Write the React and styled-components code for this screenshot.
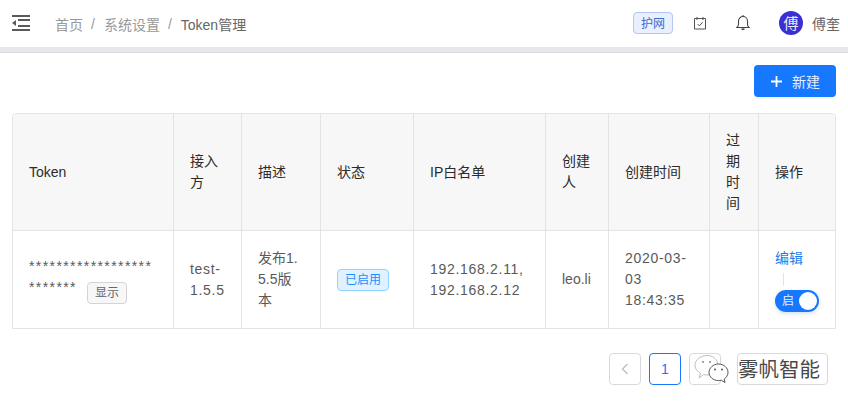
import styled, { createGlobalStyle } from 'styled-components'

const Estilos = createGlobalStyle`
  * {
    box-sizing: border-box;
  }
  html, body {
    margin: 0;
    background: #fff;
    font-family: "Liberation Sans", "Noto Sans CJK SC", sans-serif;
    font-size: 14px;
    color: #595959;
  }
`

const Cabecera = styled.header`
  display: flex;
  align-items: center;
  justify-content: space-between;
  height: 47px;
  padding: 0 8px 2px 12px;
  background: #fff;
`

const Izquierda = styled.div`
  display: flex;
  align-items: center;
  gap: 25px;
`

const Migas = styled.nav`
  display: flex;
  align-items: center;
  padding-top: 3px;
  color: #999;
`

const Separador = styled.span`
  margin: 0 9px 0 8px;
`

const MigaActual = styled.span`
  color: #666;
`

const Derecha = styled.div`
  display: flex;
  align-items: center;
`

const Etiqueta = styled.span`
  display: flex;
  align-items: center;
  justify-content: center;
  width: 40px;
  height: 22px;
  margin-right: 20px;
  border: 1px solid #b3c6f4;
  border-radius: 4px;
  background: #e9effd;
  color: #3f68cc;
  font-size: 12px;
`

const Icono = styled.svg`
  display: block;
  flex: none;
  margin-right: ${(p) => p.$derecha}px;
`

const Avatar = styled.span`
  display: flex;
  align-items: center;
  justify-content: center;
  width: 24px;
  height: 24px;
  margin-right: 9px;
  border-radius: 50%;
  background: #3a2fd2;
  color: #e8e8ff;
  font-size: 15px;
`

const Nombre = styled.span`
  color: #666;
  white-space: nowrap;
`

const Franja = styled.div`
  height: 6px;
  background: #e5e7eb;
  border-bottom: 1px solid #dcdcdc;
`

const Contenido = styled.main`
  padding: 12px 12px 0;
`

const Barra = styled.div`
  display: flex;
  justify-content: flex-end;
  margin-bottom: 16px;
`

const BotonNuevo = styled.button`
  display: flex;
  align-items: center;
  gap: 10px;
  width: 82px;
  height: 32px;
  padding: 0 0 0 17px;
  border: none;
  border-radius: 4px;
  background: #1677ff;
  box-shadow: 0 2px 0 rgba(0, 0, 0, 0.04);
  color: #e6f0ff;
  font-family: inherit;
  font-size: 14px;
`

const MarcoTabla = styled.div`
  border: 1px solid #e3e3e3;
  border-radius: 4px 4px 0 0;
  overflow: hidden;
`

const Tabla = styled.table`
  width: 822px;
  table-layout: fixed;
  border-collapse: separate;
  border-spacing: 0;
  line-height: 21px;
`

const Cabeza = styled.th`
  padding: 16px;
  background: #f7f7f7;
  border-right: 1px solid #e3e3e3;
  border-bottom: 1px solid #e3e3e3;
  color: #2b2b2b;
  font-weight: 400;
  text-align: left;
  &:last-child {
    border-right: none;
  }
`

const Celda = styled.td`
  padding: 16px;
  border-right: 1px solid #e3e3e3;
  letter-spacing: ${(p) => (p.$numeros ? '0.7px' : '0')};
  word-break: ${(p) => (p.$cortar ? 'break-all' : 'normal')};
  &:last-child {
    border-right: none;
  }
`

const Asteriscos = styled.span`
  letter-spacing: 1.4px;
`

const BotonMostrar = styled.button`
  display: inline-block;
  width: 40px;
  height: 22px;
  margin-left: 10px;
  padding: 0;
  border: 1px solid #d4d4d4;
  border-radius: 4px;
  background: #f7f7f7;
  color: #666;
  font-family: inherit;
  font-size: 12px;
  line-height: 20px;
  vertical-align: -5px;
`

const Estado = styled.span`
  display: inline-block;
  width: 52px;
  height: 22px;
  border: 1px solid #91d5ff;
  border-radius: 4px;
  background: #e0f2ff;
  color: #1890ff;
  font-size: 12px;
  line-height: 20px;
  text-align: center;
`

const Enlace = styled.a`
  display: block;
  line-height: 23px;
  color: #1a7df0;
`

const Divisor = styled.span`
  display: block;
  width: 1px;
  height: 13px;
  margin: 3px 0 4px 8px;
  background: #e3e3e3;
`

const Interruptor = styled.span`
  display: flex;
  align-items: center;
  justify-content: space-between;
  width: 44px;
  height: 22px;
  padding: 0 2px 0 7px;
  border-radius: 11px;
  background: #1677ff;
  box-shadow: 0 2px 4px rgba(0, 60, 140, 0.15);
  color: #e6f0ff;
  font-size: 12px;
`

const Perilla = styled.span`
  width: 18px;
  height: 18px;
  border-radius: 50%;
  background: #fff;
`

const Paginacion = styled.div`
  position: relative;
  display: flex;
  justify-content: flex-end;
  gap: 8px;
  margin-top: 24px;
  padding-right: 8px;
`

const Pagina = styled.span`
  display: flex;
  align-items: center;
  justify-content: center;
  width: 32px;
  height: 32px;
  border: 1px solid ${(p) => (p.$activa ? '#1677ff' : '#d9d9d9')};
  border-radius: 4px;
  color: ${(p) => (p.$activa ? '#1677ff' : '#bbb')};
`

const Selector = styled.span`
  display: flex;
  align-items: center;
  width: 91px;
  height: 32px;
  margin-left: 8px;
  padding-left: 10px;
  border: 1px solid #d9d9d9;
  border-radius: 4px;
  color: #aaa;
`

// Marca de agua de WeChat, va encima de la paginación.
const MarcaAgua = styled.div`
  position: absolute;
  top: 1px;
  right: 16px;
  display: flex;
  align-items: center;
  gap: 8px;
  height: 32px;
`

const LogoAgua = styled.svg`
  display: block;
`

const TextoAgua = styled.span`
  color: #484848;
  font-size: 20.5px;
  font-weight: 400;
  line-height: 32px;
  white-space: nowrap;
  text-shadow: 0 0 1px #fff, 0 0 1px #fff;
`

const columnas = [161, 68, 79, 93, 132, 63, 101, 49, 76]
const titulos = ['Token', '接入方', '描述', '状态', 'IP白名单', '创建人', '创建时间', '过期时间', '操作']

const IconoMenu = () => (
  <Icono $derecha={0} width="18" height="16" viewBox="0 0 18 16" fill="#5a5a5a">
    <rect x="0" y="0" width="18" height="2" />
    <rect x="6" y="4" width="12" height="2" />
    <rect x="6" y="10" width="12" height="2" />
    <rect x="0" y="14" width="18" height="2" />
    <path d="M4 5v6L0 8z" />
  </Icono>
)

const IconoCalendario = () => (
  <Icono $derecha={29} width="14" height="14" viewBox="0 0 14 14" fill="none" stroke="#555" strokeWidth="1">
    <path d="M1.500 2.500h11v10.500h-11z" />
    <path d="M4 1v3M10 1v3" />
    <path d="M4.600 8l1.800 1.900L9.600 6.200" />
  </Icono>
)

const IconoCampana = () => (
  <Icono $derecha={29} width="14" height="17" viewBox="0 0 14 17" fill="none" stroke="#444" strokeWidth="1.1">
    <path d="M1 13.500c1.200-1 1.500-2 1.500-3.500V7a4.500 4.500 0 0 1 9 0v3c0 1.500.3 2.500 1.500 3.500z" />
    <path d="M7 1v1.500" />
    <path d="M5.500 15.200h3" strokeWidth="1.6" />
  </Icono>
)

const IconoMas = () => (
  <svg width="11" height="11" viewBox="0 0 11 11" stroke="#fff" strokeWidth="1.8">
    <path d="M5.500 0v11M0 5.500h11" />
  </svg>
)

const Flecha = ({ d }) => (
  <svg width="8" height="12" viewBox="0 0 8 12" fill="none" stroke="#bbb" strokeWidth="1.2">
    <path d={d} />
  </svg>
)

const LogoWechat = () => (
  <LogoAgua width="36" height="32" viewBox="0 0 36 32" fill="#fff">
    <path d="M13 1.500c6.300 0 11 4.300 11 9.800S19.300 21 13 21c-1.200 0-2.300-.2-3.400-.5L5 24l1.500-4.800C3.300 17.400 1 14.700 1 11.300 1 5.800 6.700 1.500 13 1.500z" stroke="#bdbdbd" strokeWidth="1" />
    <circle cx="9" cy="8" r="1" fill="#888" />
    <circle cx="16" cy="8" r="1" fill="#888" />
    <path d="M24.500 10c5.200 0 9.500 3.700 9.500 8.400 0 2.800-1.500 5-3.800 6.600l.8 3.500-3.700-2.300c-.9.2-1.800.4-2.800.4-5.200 0-9.500-3.700-9.500-8.200S19.300 10 24.500 10z" stroke="#555" strokeWidth="1" />
    <circle cx="21" cy="15.500" r="1" fill="#555" />
    <circle cx="28" cy="15.500" r="1" fill="#555" />
  </LogoAgua>
)

export default function App() {
  return (
    <>
      <Estilos />
      <Cabecera>
        <Izquierda>
          <IconoMenu />
          <Migas>
            <span>首页</span>
            <Separador>/</Separador>
            <span>系统设置</span>
            <Separador>/</Separador>
            <MigaActual>Token管理</MigaActual>
          </Migas>
        </Izquierda>
        <Derecha>
          <Etiqueta>护网</Etiqueta>
          <IconoCalendario />
          <IconoCampana />
          <Avatar>傅</Avatar>
          <Nombre>傅奎</Nombre>
        </Derecha>
      </Cabecera>
      <Franja />
      <Contenido>
        <Barra>
          <BotonNuevo>
            <IconoMas />
            新建
          </BotonNuevo>
        </Barra>
        <MarcoTabla>
          <Tabla>
            <colgroup>
              {columnas.map((ancho, i) => (
                <col key={i} width={ancho} />
              ))}
            </colgroup>
            <thead>
              <tr>
                {titulos.map((titulo) => (
                  <Cabeza key={titulo}>{titulo}</Cabeza>
                ))}
              </tr>
            </thead>
            <tbody>
              <tr>
                <Celda $cortar>
                  <Asteriscos>******************</Asteriscos>
                  <br />
                  <Asteriscos>*******</Asteriscos>
                  <BotonMostrar>显示</BotonMostrar>
                </Celda>
                <Celda $numeros>test-1.5.5</Celda>
                <Celda $cortar>发布1.5.5版本</Celda>
                <Celda>
                  <Estado>已启用</Estado>
                </Celda>
                <Celda $numeros>192.168.2.11, 192.168.2.12</Celda>
                <Celda>leo.li</Celda>
                <Celda $numeros>2020-03-03 18:43:35</Celda>
                <Celda />
                <Celda>
                  <Enlace>编辑</Enlace>
                  <Divisor />
                  <Interruptor>
                    启
                    <Perilla />
                  </Interruptor>
                </Celda>
              </tr>
            </tbody>
          </Tabla>
        </MarcoTabla>
        <Paginacion>
          <Pagina>
            <Flecha d="M6.500 1L1.500 6l5 5" />
          </Pagina>
          <Pagina $activa>1</Pagina>
          <Pagina />
          <Selector />
          <MarcaAgua>
            <LogoWechat />
            <TextoAgua>雾帆智能</TextoAgua>
          </MarcaAgua>
        </Paginacion>
      </Contenido>
    </>
  )
}
